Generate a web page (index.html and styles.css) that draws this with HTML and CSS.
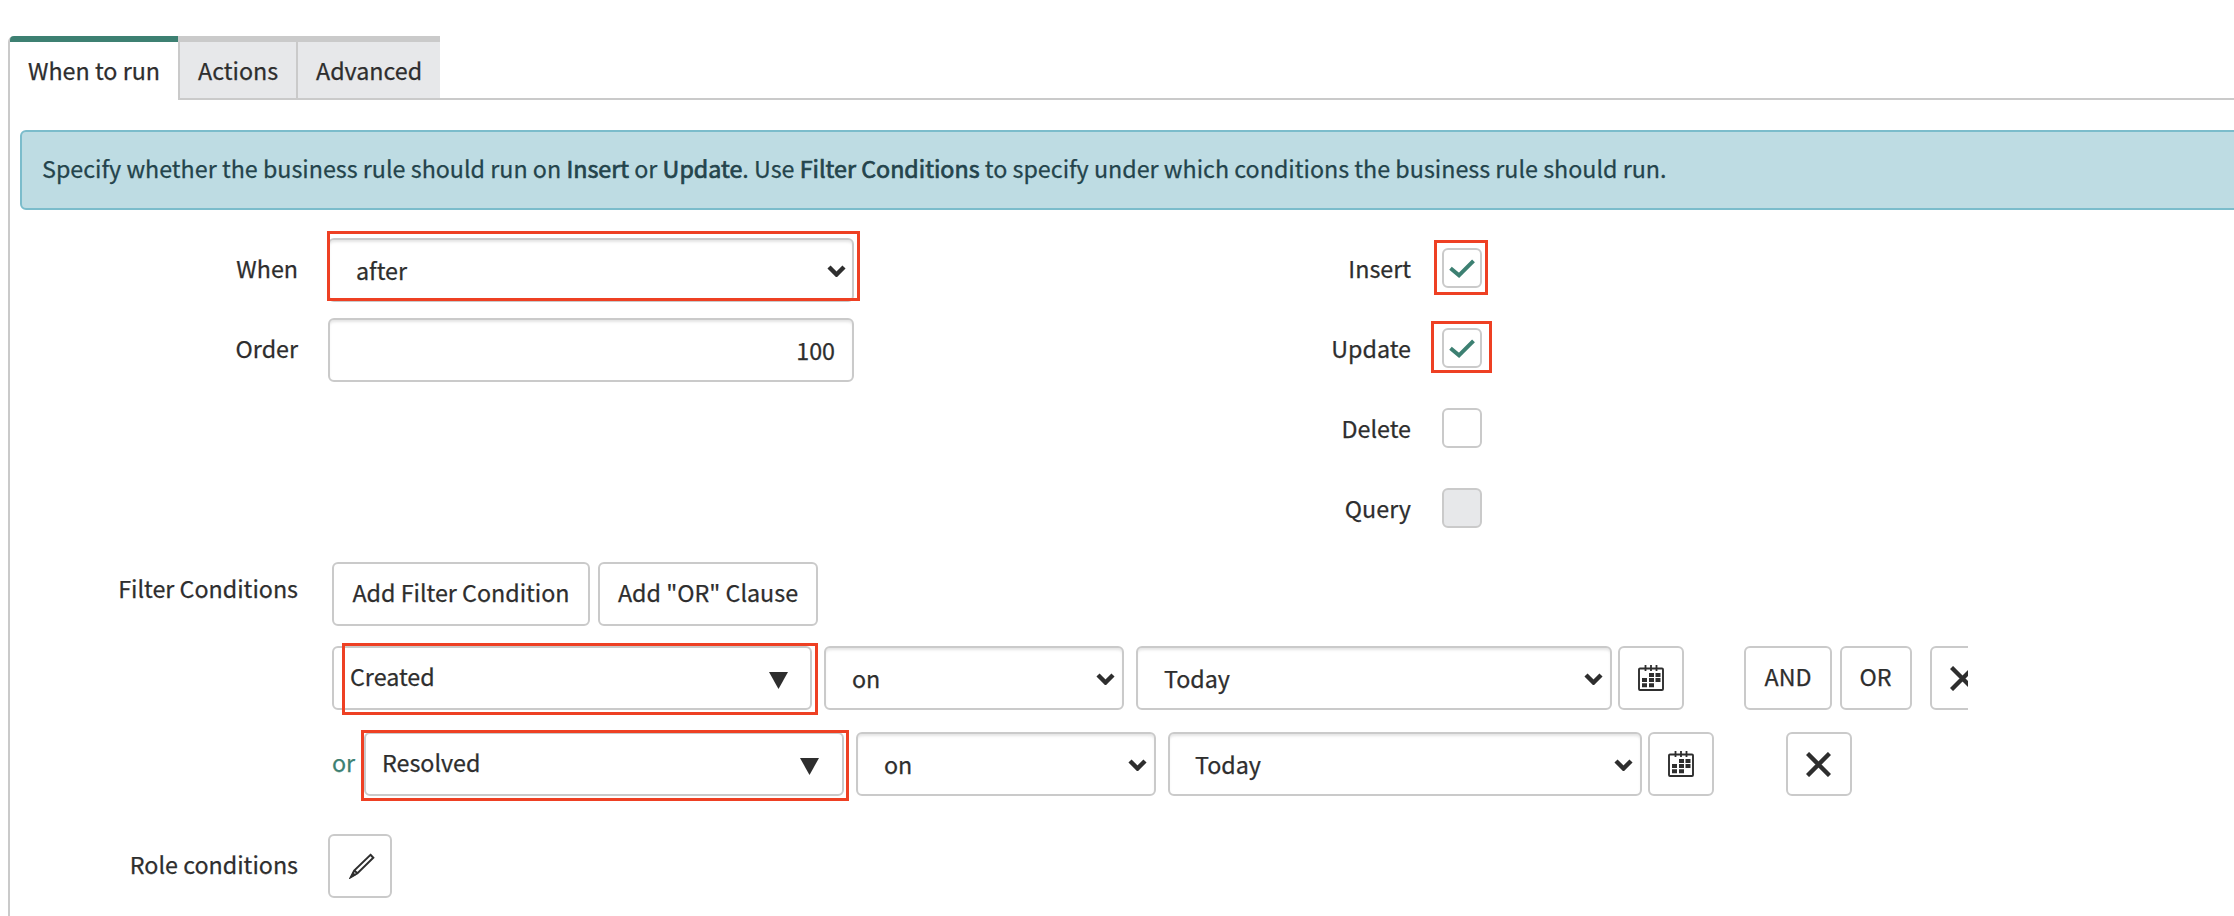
FILE: index.html
```html
<!DOCTYPE html>
<html lang="en">
<head>
<meta charset="utf-8">
<title>Business Rule</title>
<link rel="stylesheet" href="styles.css">
</head>
<body>
<svg class="defs" width="0" height="0">
  <symbol id="chevron" viewBox="0 0 19 12"><path d="M2 2l7.500 7.500L17 2" fill="none" stroke="#2e2e2e" stroke-width="4.400"/></symbol>
  <symbol id="triangle" viewBox="0 0 19 17"><path d="M0 0h19L9.500 17z" fill="#2e2e2e"/></symbol>
  <symbol id="check" viewBox="0 0 26 19"><path d="M1.500 9.300l8.500 7L24.500 1.800" fill="none" stroke="#3d8072" stroke-width="4"/></symbol>
  <symbol id="cross" viewBox="0 0 25 25"><path d="M1.500 1.500l22 22M23.500 1.500l-22 22" fill="none" stroke="#2e2e2e" stroke-width="4.400"/></symbol>
  <symbol id="calendar" viewBox="0 0 26 26">
    <path d="M2 3.500h22a1 1 0 0 1 1 1v19.500a1 1 0 0 1-1 1H2a1 1 0 0 1-1-1V4.500a1 1 0 0 1 1-1z" fill="none" stroke="#2e2e2e" stroke-width="1.900"/>
    <path d="M7.500 0v6M13 0v6M18.500 0v6" stroke="#2e2e2e" stroke-width="1.800"/>
    <path d="M11 8h5v4h-5zM17.500 8h5v4h-5zM4 13h5v4H4zM11 13h5v4h-5zM17.500 13h5v4h-5zM4 18.200h5v4H4zM11 18.200h5v4h-5z" fill="#2e2e2e"/>
  </symbol>
  <symbol id="pencil" viewBox="0 0 26 26">
    <path d="M21.500 1.800L24.300 4.700L8.500 20.300L1.800 24.200L5.200 17.500zM5.200 17.500l3.300 2.800" fill="none" stroke="#2e2e2e" stroke-width="2"/>
    <path d="M1 25l3-6 3 3z" fill="#2e2e2e"/>
  </symbol>
</svg>
<main class="panel">
  <nav class="tabs">
    <a class="tab tab-active">When to run</a>
    <a class="tab">Actions</a>
    <a class="tab">Advanced</a>
    <span class="tab-rest"></span>
  </nav>
  <div class="content">
    <p class="banner"><span>Specify whether the business rule should run on <b>Insert</b> or <b>Update</b>. Use <b>Filter Conditions</b> to specify under which conditions the business rule should run.</span></p>
    <div class="columns">
      <div class="column">
        <div class="field"><label class="label">When</label>
          <div class="control select select-when"><span>after</span><svg class="chevron"><use href="#chevron"/></svg><i class="mark mark-when"></i></div></div>
        <div class="field"><label class="label">Order</label>
          <div class="control order"><span>100</span></div></div>
      </div>
      <div class="column column-right">
        <div class="field"><label class="label">Insert</label><div class="checkbox"><svg class="check"><use href="#check"/></svg><i class="mark mark-insert"></i></div></div>
        <div class="field"><label class="label">Update</label><div class="checkbox"><svg class="check"><use href="#check"/></svg><i class="mark mark-update"></i></div></div>
        <div class="field"><label class="label">Delete</label><div class="checkbox"></div></div>
        <div class="field"><label class="label">Query</label><div class="checkbox checkbox-disabled"></div></div>
      </div>
    </div>
    <div class="filter">
      <label class="label">Filter Conditions</label>
      <div class="filter-body">
        <div class="actions"><button class="control add-filter"><span>Add Filter Condition</span></button><button class="control add-or"><span>Add "OR" Clause</span></button></div>
        <div class="condition">
          <div class="control picker"><span>Created</span><svg class="triangle"><use href="#triangle"/></svg><i class="mark mark-created"></i></div>
          <div class="control select operator"><span>on</span><svg class="chevron"><use href="#chevron"/></svg></div>
          <div class="control select value"><span>Today</span><svg class="chevron"><use href="#chevron"/></svg></div>
          <button class="control icon-button date"><svg class="calendar"><use href="#calendar"/></svg></button>
          <button class="control and"><span>AND</span></button>
          <button class="control or-button"><span>OR</span></button>
          <div class="clip"><button class="control icon-button"><svg class="cross"><use href="#cross"/></svg></button></div>
        </div>
        <div class="condition condition-or">
          <span class="or">or</span>
          <div class="control picker picker-or"><span>Resolved</span><svg class="triangle"><use href="#triangle"/></svg><i class="mark mark-resolved"></i></div>
          <div class="control select operator"><span>on</span><svg class="chevron"><use href="#chevron"/></svg></div>
          <div class="control select value value-or"><span>Today</span><svg class="chevron"><use href="#chevron"/></svg></div>
          <button class="control icon-button"><svg class="calendar"><use href="#calendar"/></svg></button>
          <button class="control icon-button remove"><svg class="cross"><use href="#cross"/></svg></button>
        </div>
      </div>
    </div>
    <div class="field role"><label class="label">Role conditions</label><button class="control edit"><svg class="pencil"><use href="#pencil"/></svg></button></div>
  </div>
</main>
</body>
</html>
```

FILE: styles.css
```css
* { box-sizing: border-box; }
html, body { margin: 0; height: 916px; overflow: hidden; background: #fff; }
body {
  padding: 36px 0 0 8px;
  color: #2e2e2e;
  font: 23.29px/36px "Noto Sans CJK SC", "Noto Sans", sans-serif;
  -webkit-text-stroke: 0.25px;
}
.defs { position: absolute; }
svg { display: block; flex: none; }
button { font: inherit; color: inherit; margin: 0; }

.panel { height: 880px; border-left: 2px solid #cacaca; border-top-left-radius: 6px; }
.tabs { display: flex; height: 64px; }
.tab {
  height: 64px;
  padding: 10px 0 0 18px;
  border-top: 6px solid #cacaca;
  border-bottom: 2px solid #cacaca;
  background: #e7e8ea;
  width: 144px;
  white-space: nowrap;
  box-shadow: inset 2px 0 #cacaca;
}
.tab:nth-child(2) { width: 118px; padding-left: 20px; }
.tab:nth-child(3) { padding-left: 20px; }
.tab-active { width: 168px; background: #fff; border-top-color: #3d8072; border-bottom-color: #fff; border-top-left-radius: 4px; box-shadow: none; padding-left: 18px; }
.tab-rest { flex: 1; border-bottom: 2px solid #cacaca; }

.content { padding: 30px 0 0 10px; }
.banner {
  height: 80px;
  margin: 0 -10px 0 0;
  padding: 18px 0 0 20px;
  border: 2px solid #7bbccb;
  border-radius: 6px;
  background: #bedce3;
  color: #24444c;
  white-space: nowrap;
}
.banner b { font-weight: 400; -webkit-text-stroke: 0.7px #24444c; }

.columns { display: flex; padding-top: 28px; height: 352px; }
.column { width: 1114px; flex: none; }
.column .field { height: 80px; }
.field { display: flex; }
.label { width: 278px; margin-right: 30px; padding-top: 12px; text-align: right; flex: none; white-space: nowrap; }
.column-right .label { width: 277px; margin-right: 31px; }

.control {
  position: relative;
  display: flex;
  align-items: center;
  flex: none;
  height: 64px;
  padding: 0;
  border: 2px solid #cacaca;
  border-radius: 6px;
  background: #fff;
  white-space: nowrap;
}
.control span { margin-bottom: 4px; }
.select, .order { box-shadow: inset 0 3px 3px -1px #e4e4e4; }
.select span, .order span { margin-bottom: 0; }
.select { justify-content: space-between; padding: 0 7px 0 26px; }
.select-when, .order { width: 526px; }
.select-when { padding-right: 6px; }
.order { justify-content: flex-end; padding-right: 17px; }
.chevron { width: 19px; height: 12px; margin-top: 1px; }
.triangle { width: 19px; height: 17px; margin-top: 4px; }

.checkbox {
  position: relative;
  width: 40px;
  height: 40px;
  margin-top: 10px;
  border: 2px solid #cacaca;
  border-radius: 6px;
}
.checkbox-disabled { background: #e7e8ea; }
.check { width: 26px; height: 19px; margin: 9px 0 0 5px; }

.mark { position: absolute; border: 3px solid #ee4023; pointer-events: none; }
.mark-when { left: -3px; top: -9px; width: 533px; height: 70px; }
.mark-insert { left: -10px; top: -10px; width: 54px; height: 55px; }
.mark-update { left: -13px; top: -9px; width: 61px; height: 52px; }
.mark-created { left: 8px; top: -5px; width: 476px; height: 72px; }
.mark-resolved { left: -5px; top: -4px; width: 488px; height: 71px; }

.filter { display: flex; }
.filter .label { margin-right: 34px; padding-top: 8px; }
.actions { display: flex; gap: 8px; }
.actions .control, .and, .or-button { justify-content: center; }
.add-filter { width: 258px; }
.add-or { width: 220px; }
.condition { display: flex; margin-top: 20px; }
.condition-or { margin-top: 22px; }
.picker { width: 480px; justify-content: space-between; padding: 0 22px 0 16px; }
.picker-or { width: 480px; padding-right: 23px; }
.operator { width: 300px; margin-left: 12px; }
.value { width: 476px; margin: 0 6px 0 12px; }
.value-or { width: 474px; padding-left: 25px; }
.icon-button { width: 66px; justify-content: center; }
.date { padding-right: 1px; }
.calendar { width: 26px; height: 26px; }
.cross { width: 25px; height: 25px; margin-right: 1px; }
.and { width: 88px; margin-left: 60px; }
.or-button { width: 72px; margin-left: 8px; padding-right: 1px; }
.clip { width: 38px; margin-left: 18px; overflow: hidden; }
.or { width: 32px; padding-top: 12px; color: #3d8072; }
.remove { margin-left: 72px; }

.role { margin-top: 38px; }
.edit { width: 64px; justify-content: center; padding-left: 3px; }
.pencil { width: 26px; height: 26px; }
```
